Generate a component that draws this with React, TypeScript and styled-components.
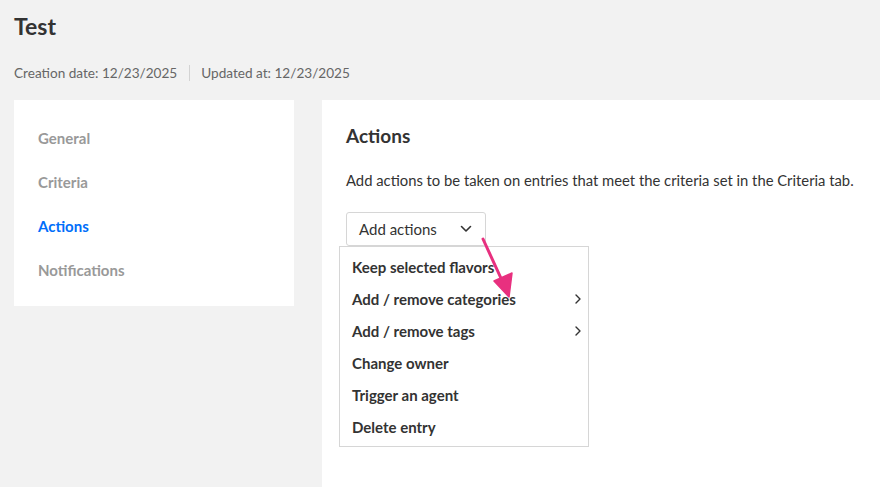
import React from 'react';
import styled, { createGlobalStyle } from 'styled-components';

const GlobalStyle = createGlobalStyle`
  html, body {
    margin: 0;
    padding: 0;
    background: #f2f2f2;
    font-family: Lato, "Open Sans", sans-serif;
    color: #333;
    overflow: hidden;
  }
`;

const navItems = ['General', 'Criteria', 'Actions', 'Notifications'];
const menuItems = [
  { label: 'Keep selected flavors', sub: false },
  { label: 'Add / remove categories', sub: true },
  { label: 'Add / remove tags', sub: true },
  { label: 'Change owner', sub: false },
  { label: 'Trigger an agent', sub: false },
  { label: 'Delete entry', sub: false },
];

const App: React.FC = () => {
  return (
    <S.Page>
      <GlobalStyle />
      <S.Header>
        <S.Title>Test</S.Title>
        <S.Meta>
          <span>Creation date: 12/23/2025</span>
          <S.Divider />
          <span>Updated at: 12/23/2025</span>
        </S.Meta>
      </S.Header>
      <S.Body>
        <S.Sidebar>
          {navItems.map((item) => (
            <S.NavItem key={item} $active={item === 'Actions'}>
              {item}
            </S.NavItem>
          ))}
        </S.Sidebar>
        <S.Panel>
          <S.PanelTitle>Actions</S.PanelTitle>
          <S.Description>
            Add actions to be taken on entries that meet the criteria set in the Criteria tab.
          </S.Description>
          <S.DropdownWrap>
            <S.DropdownButton>
              Add actions
              <svg width="14" height="14" viewBox="0 0 14 14" fill="none">
                <path d="M2.5 4.5 L7 9 L11.5 4.5" stroke="#333" strokeWidth="1.6" strokeLinecap="round" strokeLinejoin="round" />
              </svg>
            </S.DropdownButton>
            <S.Menu>
              {menuItems.map((m) => (
                <S.MenuItem key={m.label}>
                  {m.label}
                  {m.sub && (
                    <svg width="8" height="12" viewBox="0 0 8 12" fill="none">
                      <path d="M2 2 L6 6 L2 10" stroke="#333" strokeWidth="1.4" strokeLinecap="round" strokeLinejoin="round" />
                    </svg>
                  )}
                </S.MenuItem>
              ))}
            </S.Menu>
            <S.Pointer width="40" height="70" viewBox="0 0 40 70">
              <path d="M4 4 L26 52" stroke="#e8307f" strokeWidth="3" strokeLinecap="round" />
              <path d="M30 62 L15 46 L33 38 Z" fill="#e8307f" stroke="#e8307f" strokeWidth="1.5" strokeLinejoin="round" />
            </S.Pointer>
          </S.DropdownWrap>
        </S.Panel>
      </S.Body>
    </S.Page>
  );
};

const S = {
  Page: styled.div`
    width: 880px;
    height: 487px;
    display: flex;
    flex-direction: column;
  `,
  Header: styled.div`
    padding: 12px 14px 0;
  `,
  Title: styled.h1`
    margin: 0;
    font-size: 23px;
    font-weight: 700;
    line-height: 28px;
    color: #333;
  `,
  Meta: styled.div`
    display: flex;
    align-items: center;
    margin-top: 24px;
    height: 18px;
    font-size: 13.6px;
    color: #666;
  `,
  Divider: styled.span`
    width: 1px;
    height: 16px;
    background: #d3d3d3;
    margin: 0 11px 0 12px;
  `,
  Body: styled.div`
    flex: 1;
    display: flex;
    gap: 28px;
    padding-left: 14px;
    margin-top: 18px;
  `,
  Sidebar: styled.nav`
    width: 280px;
    height: 206px;
    box-sizing: border-box;
    background: #fff;
    padding: 29px 24px 0;
    display: flex;
    flex-direction: column;
    gap: 26px;
    align-self: flex-start;
  `,
  NavItem: styled.div<{ $active: boolean }>`
    font-size: 15px;
    font-weight: 700;
    line-height: 18px;
    color: ${(p) => (p.$active ? '#006efa' : '#999')};
  `,
  Panel: styled.section`
    flex: 1;
    background: #fff;
    padding: 24px 24px 0;
  `,
  PanelTitle: styled.h2`
    margin: 0;
    font-size: 19px;
    font-weight: 700;
    line-height: 24px;
    color: #333;
  `,
  Description: styled.p`
    margin: 23px 0 0;
    font-size: 14.8px;
    line-height: 18px;
    white-space: nowrap;
    color: #333;
  `,
  DropdownWrap: styled.div`
    position: relative;
    margin-top: 23px;
    width: 140px;
  `,
  DropdownButton: styled.div`
    box-sizing: border-box;
    width: 140px;
    height: 34px;
    border: 1px solid #d6d6d6;
    border-radius: 3px;
    display: flex;
    align-items: center;
    justify-content: space-between;
    padding: 0 12px 0 12px;
    font-size: 15px;
    color: #333;
  `,
  Menu: styled.div`
    position: absolute;
    top: 34px;
    left: -7px;
    width: 250px;
    height: 201px;
    box-sizing: border-box;
    background: #fff;
    border: 1px solid #d6d6d6;
    padding: 4px 0 0;
  `,
  MenuItem: styled.div`
    display: flex;
    align-items: center;
    justify-content: space-between;
    height: 32px;
    padding: 0 6px 0 12px;
    font-size: 15px;
    font-weight: 700;
    color: #333;
  `,
  Pointer: styled.svg`
    position: absolute;
    left: 133px;
    top: 23px;
    overflow: visible;
  `,
};

export default App;
